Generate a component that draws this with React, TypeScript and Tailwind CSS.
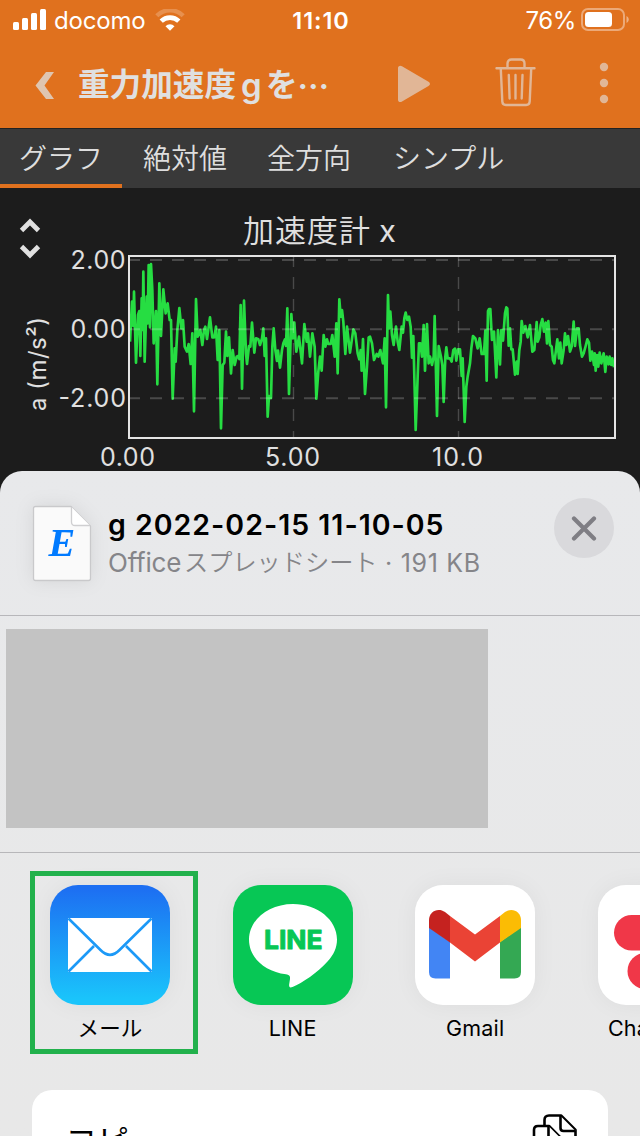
import type { ReactNode } from 'react'

const tabs = [
  { label: 'グラフ', width: 'w-[122px] pl-[19px]', active: true },
  { label: '絶対値', width: 'w-[124px] pl-[21px]', active: false },
  { label: '全方向', width: 'w-[126px] pl-[21px]', active: false },
  { label: 'シンプル', width: 'w-[150px] pl-[21px]', active: false },
]

// accelerometer trace, three units per pixel
const trace =
  '30,275 36,155 40,228 42,125 48,338 54,195 58,183 61,318 65,145 68,240 70,65 74,335 80,140 83,220 86,45 90,232 93,42 97,120 101,280 108,183 112,403 118,100 123,258 130,118 137,190 143,160 149,210 153,210 158,446 164,295 167,335 172,240 178,174 184,235 189,210 194,290 201,305 206,282 212,342 217,250 222,484 228,147 233,260 241,240 247,285 252,240 256,230 261,267 270,202 277,262 283,262 288,230 293,330 298,240 303,535 308,345 313,338 318,245 322,318 327,262 333,370 338,300 344,345 350,320 354,318 358,327 362,165 366,416 372,152 378,310 381,342 387,288 391,290 396,218 403,308 408,265 415,268 420,285 426,265 430,235 434,318 438,265 443,500 447,438 453,444 457,290 461,235 466,300 471,333 474,302 480,353 486,300 490,280 495,268 498,288 502,175 507,432 514,192 519,265 523,218 529,305 537,260 546,340 553,222 560,275 564,250 570,320 577,250 584,290 589,446 595,365 600,320 605,362 611,255 616,290 621,268 625,282 632,282 637,255 644,320 649,220 653,370 658,148 662,200 666,180 670,215 676,312 681,230 690,308 700,238 706,250 713,310 718,328 722,300 725,362 729,267 735,432 741,350 746,262 750,260 756,280 762,330 770,312 775,320 781,300 789,340 794,265 798,472 804,135 807,235 811,185 816,255 821,285 828,230 833,275 838,300 845,230 849,248 853,205 857,188 862,210 867,200 872,230 876,323 880,258 887,540 893,380 897,280 901,280 906,320 911,225 915,362 921,222 926,340 930,320 936,345 941,320 944,198 951,498 956,288 963,320 967,345 971,456 976,320 979,292 983,325 990,325 995,335 1000,300 1005,296 1009,332 1014,298 1020,298 1025,378 1028,325 1034,516 1039,410 1043,380 1050,340 1054,295 1059,258 1066,265 1073,295 1079,265 1085,312 1092,312 1096,242 1100,392 1104,183 1107,177 1111,177 1116,270 1122,245 1129,382 1134,240 1140,343 1144,240 1149,272 1155,190 1159,172 1162,175 1166,287 1170,235 1174,298 1178,298 1185,374 1190,335 1193,372 1198,300 1202,275 1205,213 1210,248 1216,228 1223,262 1230,225 1237,305 1243,300 1250,216 1253,275 1258,262 1262,225 1267,207 1272,245 1277,218 1281,280 1285,213 1290,285 1295,290 1299,330 1303,340 1308,300 1312,268 1317,325 1321,278 1325,340 1331,300 1335,250 1339,285 1344,258 1350,305 1355,290 1361,215 1365,288 1371,235 1376,235 1380,285 1386,320 1391,310 1397,288 1402,268 1407,278 1411,332 1416,305 1422,345 1424,310 1427,362 1431,315 1435,350 1439,308 1444,340 1451,310 1456,366 1460,320 1466,343 1469,320 1474,345 1477,325 1482,352'

function StatusBar() {
  return (
    <div className="flex h-10 items-center justify-between pl-[13px] pr-[11px] text-white">
      <div className="flex w-[236px] items-center">
        <svg width="34" height="22" viewBox="0 0 34 22" fill="#fff">
          <rect x="0" y="13" width="6" height="8" rx="1.5" />
          <rect x="9" y="9" width="6" height="12" rx="1.5" />
          <rect x="18" y="4" width="6" height="17" rx="1.5" />
          <rect x="27" y="0" width="6" height="21" rx="1.5" />
        </svg>
        <span className="ml-[7px] mt-[2px] w-[92px] whitespace-nowrap text-[24px] leading-10 tracking-[-0.2px]">docomo</span>
        <svg className="ml-[9px]" width="30" height="22" viewBox="0 0 30 22" fill="none">
          <path d="M1.800 6.800a18.600 18.600 0 0 1 26.400 0" stroke="#fff" strokeOpacity=".22" strokeWidth="4.400" />
          <path d="M6.200 12.200a12.500 12.500 0 0 1 17.600 0" stroke="#fff" strokeWidth="4.600" />
          <path d="M15 21.800l-4.500-4.600a6.400 6.400 0 0 1 9 0z" fill="#fff" />
        </svg>
      </div>
      <span className="mt-[2px] w-[140px] text-center text-[23.500px] font-semibold leading-10 tracking-[0.900px]">11:10</span>
      <div className="flex w-[236px] items-center justify-end">
        <span className="mt-[2px] whitespace-nowrap text-[24px] leading-10 tracking-[-0.400px]">76%</span>
        <svg className="ml-[5px]" width="48" height="24" viewBox="0 0 48 24">
          <rect x="1" y="1" width="42" height="21" rx="6" fill="none" stroke="#fff" strokeOpacity=".4" strokeWidth="2" />
          <rect x="4" y="4" width="27" height="15" rx="3.500" fill="#fff" />
          <path d="M45.500 8v7c3-1.500 3-5.500 0-7z" fill="#fff" fillOpacity=".45" />
        </svg>
      </div>
    </div>
  )
}

function Toolbar() {
  return (
    <div className="flex h-[88px] items-start">
      <svg className="ml-[35px] mt-[32px]" width="20" height="27" viewBox="0 0 20 27" fill="#dfc5b0">
        <path d="M11 0h8L9.500 13.500 19 27h-8L.5 13.500z" />
      </svg>
      <h1 className="ml-[23px] mt-[21px] flex h-12 w-[260px] items-center whitespace-nowrap text-[31.600px] font-bold leading-[48px] text-[#e0e0e0]">
        <span>重力加速度</span>
        <span className="ml-[5px] mr-[4px] w-[21px] text-[33px] font-semibold">g</span>
        <span>を</span>
        <span className="font-['Noto_Sans_CJK_JP',sans-serif]">…</span>
      </h1>
      <svg className="ml-[60px] mt-[25px]" width="33" height="38" viewBox="0 0 33 38" fill="#e1b696">
        <path d="M0 3C0 1 2 0 4 1.200l26.500 15.500c2 1.200 2 3.200 0 4.400L4 36.500c-2 1.200-4 .2-4-1.800z" />
      </svg>
      <svg className="ml-[64px] mt-[18px]" width="42" height="49" viewBox="0 0 42 49" fill="none" stroke="#e1b696" strokeWidth="2.400" strokeLinecap="round" strokeLinejoin="round">
        <path d="M1.500 10.200h38M12.500 9.500V5.500q0-4 4-4h9q4 0 4 4v4M5.800 11l1.500 32.500q.2 3.500 3.500 3.500h20.400q3.300 0 3.500-3.500L36.200 11" />
        <path d="M13.800 17l.8 23.500M20.500 17v23.500M27.500 17l-.8 23.500" />
      </svg>
      <svg className="ml-[62px] mt-[22px]" width="10" height="42" viewBox="0 0 10 42" fill="#e1b696">
        <circle cx="5" cy="5" r="4.200" />
        <circle cx="5" cy="21" r="4.200" />
        <circle cx="5" cy="37" r="4.200" />
      </svg>
    </div>
  )
}

function Tabs() {
  return (
    <nav className="flex h-[60px] border-t border-[#222] bg-[#393939] text-[28px] leading-[60px] text-[#dedede]">
      {tabs.map(t => (
        <div key={t.label} className={`${t.width} whitespace-nowrap ${t.active ? 'border-b-4 border-[#e0711e]' : ''}`}>
          <span className="font-[350]">{t.label}</span>
        </div>
      ))}
    </nav>
  )
}

function Chart() {
  return (
    <svg className="block" width="640" height="283" viewBox="0 188 640 283">
      <g fill="none" stroke="#e0e0e0" strokeWidth="4.800">
        <path d="M21.500 230.500l8.500-8.500 8.500 8.500M21.500 246.500l8.500 8.500 8.500-8.500" />
      </g>
      <g fill="#e0e0e0" fontSize="25">
        <text x="243" y="241.500" fontSize="31" fontWeight="350" textLength="127">加速度計</text>
        <text x="379" y="242" fontSize="31">x</text>
        <text x="70.500" y="269" textLength="55">2.00</text>
        <text x="70.500" y="338" textLength="55">0.00</text>
        <text x="58.500" y="407" textLength="67.500">-2.00</text>
        <text x="100" y="465.500" textLength="55">0.00</text>
        <text x="265" y="465.500" textLength="55">5.00</text>
        <text x="432" y="465.500" textLength="51">10.0</text>
        <text transform="translate(46 411) rotate(-90)" fontSize="24" textLength="94">a (m/s²)</text>
      </g>
      <polyline points={trace} transform="translate(120 250) scale(.33333)" fill="none" stroke="#26dd42" strokeWidth="8" strokeLinejoin="round" />
      <g stroke="#fff" strokeOpacity=".2">
        <path d="M128 260h487M128 329.200h487M128 398.300h487" strokeWidth="2" strokeDasharray="12 10" />
        <path d="M293.500 255v184M458.500 255v184" strokeWidth="1.400" strokeDasharray="12 10" />
      </g>
      <rect x="129" y="256" width="486" height="182" fill="none" stroke="#e4e4e4" strokeWidth="2" />
    </svg>
  )
}

function FileHeader() {
  return (
    <div className="flex h-[145px] items-start border-b border-[#b7b7ba]">
      <svg className="ml-[32px] mt-[34px] drop-shadow-[0_0_9px_rgba(0,0,0,0.08)]" width="60" height="77" viewBox="0 0 60 77">
        <path d="M3.500 1.500H39L58.500 21v52.500q0 2-2 2h-53q-2 0-2-2v-70q0-2 2-2z" fill="#fafafa" stroke="#c9c9cb" strokeWidth="1.300" />
        <path d="M39.500 2v15q0 3.500 3.500 3.500h15" fill="#fff" stroke="#cfcfd1" strokeWidth="1.300" />
        <text x="16.500" y="51" fontFamily="Liberation Serif, serif" fontSize="40" fontWeight="700" fontStyle="italic" fill="#007aff">E</text>
      </svg>
      <div className="ml-[16px] mt-[34px] w-[446px] whitespace-nowrap">
        <h2 className="h-10 text-[28.500px] font-semibold leading-10 tracking-[1px] text-black">g 2022-02-15 11-10-05</h2>
        <p className="flex h-9 items-center text-[26px] leading-9 text-[#858589]">
          <span className="w-[76px] tracking-[-0.200px]">Office</span>
          <span className="w-[193px] text-[24.200px] font-[350]">スプレッドシート</span>
          <span className="ml-[8px] text-[25px] tracking-[0.700px]">· 191 KB</span>
        </p>
      </div>
      <button aria-label="閉じる" className="mt-[27px] grid size-[60px] place-items-center rounded-full bg-[#d9d9dc]">
        <svg width="26" height="26" viewBox="0 0 26 26" stroke="#7f7e84" strokeWidth="4.200" strokeLinecap="round">
          <path d="M3 3.500l20 20M23 3.500l-20 20" />
        </svg>
      </button>
    </div>
  )
}

function MailIcon() {
  return (
    <svg width="120" height="120" viewBox="0 0 120 120">
      <defs>
        <linearGradient id="mail" x1="0" y1="0" x2="0" y2="1">
          <stop offset="0.030" stopColor="#1d6ff2" />
          <stop offset="0.950" stopColor="#1ac4fb" />
        </linearGradient>
      </defs>
      <rect width="120" height="120" fill="url(#mail)" />
      <rect x="18" y="33" width="84" height="54" rx="1" fill="#fff" />
      <path d="M18.500 33.500L50.500 65q9.500 9.500 19 0l32-31.500M18.500 86.500L44 61M101.500 86.500L76 61" fill="none" stroke="#1c99f7" strokeWidth="2.600" />
    </svg>
  )
}

function LineIcon() {
  return (
    <svg width="120" height="120" viewBox="0 0 120 120">
      <rect width="120" height="120" fill="#07c755" />
      <path d="M60 19c24.500 0 44 15.800 44 35.500 0 8-3.200 15.200-9.500 22C85 87.500 69 98 59.500 102c-3.500 1.500-3.700-.8-3.200-3.500l.7-4.500c.3-3-.5-4.200-4-4.700C31.500 86.500 16 72.500 16 54.500 16 34.800 35.700 19 60 19z" fill="#fff" />
      <text x="31" y="64.300" fontSize="26" fontWeight="700" fill="#07c755" stroke="#07c755" strokeWidth="1" strokeLinejoin="round" textLength="58.500" lengthAdjust="spacingAndGlyphs">LINE</text>
    </svg>
  )
}

function GmailIcon() {
  return (
    <svg width="120" height="120" viewBox="0 0 120 120">
      <rect width="120" height="120" fill="#fff" />
      <path d="M14 42l21 15v36.500H20.500Q14 93.500 14 87z" fill="#4285f4" />
      <path d="M106 42L85 57v36.500h14.500q6.500 0 6.500-6.500z" fill="#34a853" />
      <path d="M35 31l25 18.500L85 31v26.500L60 76.500l-25-19z" fill="#ea4335" />
      <path d="M14 43v-8c0-8.500 9-13 16-8l5 4v26.500z" fill="#c5221f" />
      <path d="M106 43v-8c0-8.500-9-13-16-8l-5 4v26.500z" fill="#fbbc04" />
    </svg>
  )
}

function ChatworkIcon() {
  return (
    <svg width="120" height="120" viewBox="0 0 120 120" fill="#f03748">
      <rect width="120" height="120" fill="#fff" />
      <rect x="16" y="30" width="60" height="35.500" rx="17.700" />
      <rect x="29.500" y="68" width="60" height="36" rx="18" />
    </svg>
  )
}

function AppItem({ label, children }: { label: string; children: ReactNode }) {
  return (
    <div className="flex w-[120px] shrink-0 flex-col items-center">
      <div className="overflow-hidden rounded-[28px] shadow-[0_0_24px_rgba(0,0,0,0.05)]">{children}</div>
      <span className="mt-[7px] whitespace-nowrap text-[21.500px] leading-[32px] tracking-[0.200px] text-black">{label}</span>
    </div>
  )
}

function CopyRow() {
  return (
    <div className="mx-8 flex h-[46px] items-start justify-between overflow-hidden rounded-t-[20px] bg-white pl-[33px] pr-[30px]">
      <span className="mt-[28px] whitespace-nowrap text-[32px] leading-[48px] text-black">コピー</span>
      <svg className="mt-[24px]" width="46" height="50" viewBox="0 0 46 50" fill="#fff" stroke="#000" strokeWidth="2.600" strokeLinejoin="round">
        <path d="M12.500 32V6q0-4.500 4.500-4.500h12L43.500 16v18q0 4-4 4h-23q-4 0-4-4z" />
        <path d="M28.500 2v12q0 3 3 3h12" />
        <path d="M2 46V16q0-4 4-4h11L32 27v19z" />
        <path d="M16.500 12v12q0 3 3 3h12" />
      </svg>
    </div>
  )
}

export default function App() {
  return (
    <div lang="ja" className="h-[1136px] w-[640px] overflow-hidden bg-[#1c1c1c] font-['Inter','Noto_Sans_CJK_JP',sans-serif]">
      <header className="h-32 bg-[#e0711e]">
        <StatusBar />
        <Toolbar />
      </header>
      <Tabs />
      <Chart />
      <section className="h-[665px] overflow-hidden rounded-t-[22px] bg-linear-to-b from-[#e8e9eb] to-[#e8e8e8]">
        <FileHeader />
        <div className="h-[237px] border-b border-[#b7b7ba] pl-[6px] pt-[13px]">
          <div className="h-[199px] w-[482px] bg-[#c3c3c3]" />
        </div>
        <div className="relative flex h-[237px] gap-[62.600px] pl-[50px] pt-[32px]">
          <AppItem label="メール"><MailIcon /></AppItem>
          <AppItem label="LINE"><LineIcon /></AppItem>
          <AppItem label="Gmail"><GmailIcon /></AppItem>
          <AppItem label="Chatwork"><ChatworkIcon /></AppItem>
          <div className="absolute left-[30px] top-[18px] h-[183px] w-[168px] border-5 border-[#22b14c]" />
        </div>
        <CopyRow />
      </section>
    </div>
  )
}
